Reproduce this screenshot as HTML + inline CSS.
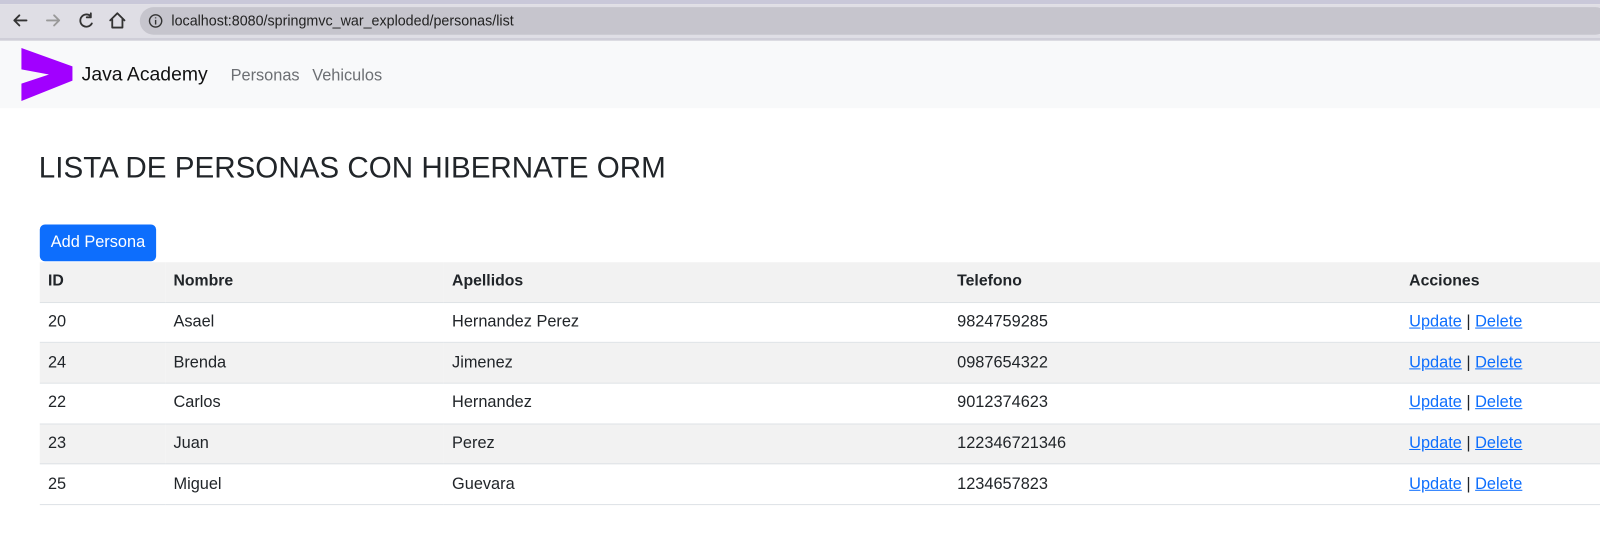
<!DOCTYPE html>
<html><head><meta charset="utf-8"><style>
*{margin:0;padding:0;box-sizing:border-box}
body{width:1600px;height:556px;overflow:hidden;background:#fff;font-family:"Liberation Sans",Arial,sans-serif;color:#212529;position:relative}
#w{position:absolute;left:0;top:0;width:1568px;height:545px;transform:scale(1.0204);transform-origin:0 0}
.tabs{position:absolute;left:0;top:0;width:1568px;height:4px;background:#c9c8d9}
.tool{position:absolute;left:0;top:4px;width:1568px;height:33px;background:#dfdee5}
.url{position:absolute;left:137px;top:7px;width:1440px;height:27px;border-radius:14px;background:#c6c5cd}
.urltext{position:absolute;left:168px;top:12px;font-size:14px;color:#222}
.sep{position:absolute;left:0;top:37px;width:1568px;height:3px;background:#cfced8}
.nav{position:absolute;left:0;top:40px;width:1568px;height:66px;background:#f8f9fa}
.abs{position:absolute}
table{position:absolute;left:39px;top:257px;width:1529px;border-collapse:collapse;font-size:16px}
td,th{height:39.7px;padding:0 8px;text-align:left;border-bottom:1px solid #dee2e6}
th{font-weight:bold;height:39px;font-size:15.5px}
tr.g{background:#f2f2f2}
a{color:#0d6efd;text-decoration:underline}
</style></head><body><div id="w">
<div class="tabs"></div><div class="tool"></div>
<svg class="abs" style="left:10px;top:10px" width="120" height="20" fill="none" stroke-width="1.8" stroke-linecap="round" stroke-linejoin="round">
<path d="M16 10H4M9 5L4 10L9 15" stroke="#333"/>
<path d="M36 10H48M43 5L48 10L43 15" stroke="#999"/>
<path d="M79 6A6 6 0 1 0 80 13M79 3V7H75" stroke="#333"/>
<path d="M98 10L105 3L112 10M100 9V17H110V9" stroke="#333"/>
</svg>
<div class="url"></div>
<svg class="abs" style="left:145px;top:13px" width="16" height="16"><circle cx="7.5" cy="7.5" r="6" fill="none" stroke="#333" stroke-width="1.4"/><path d="M7.5 6.5V11M7.5 4V5" stroke="#333" stroke-width="1.4"/></svg>
<div class="urltext">localhost:8080/springmvc_war_exploded/personas/list</div>
<div class="sep"></div>
<div class="nav"></div>
<svg class="abs" style="left:0;top:0" width="80" height="110"><polygon points="21,47 71,65 71,79 21,99 21,82 48,73 21,68" fill="#a100ff"/></svg>
<div class="abs" style="left:80px;top:63px;font-size:19px;color:#111">Java Academy</div>
<div class="abs" style="left:226px;top:66px;font-size:16px;color:#6c6f73">Personas</div>
<div class="abs" style="left:306px;top:66px;font-size:16px;color:#6c6f73">Vehiculos</div>
<div class="abs" style="left:38px;top:149px;font-size:29px;color:#212529">LISTA DE PERSONAS CON HIBERNATE ORM</div>
<div class="abs" style="left:39px;top:220px;width:114px;height:36px;background:#0d6efd;border-radius:5px;color:#fff;font-size:16px;line-height:36px;text-align:center">Add Persona</div>
<table>
<colgroup><col style="width:123px"><col style="width:273px"><col style="width:495px"><col style="width:443px"><col></colgroup>
<tr class="g"><th>ID</th><th>Nombre</th><th>Apellidos</th><th>Telefono</th><th>Acciones</th></tr>
<tr><td>20</td><td>Asael</td><td>Hernandez Perez</td><td>9824759285</td><td><a>Update</a> | <a>Delete</a></td></tr>
<tr class="g"><td>24</td><td>Brenda</td><td>Jimenez</td><td>0987654322</td><td><a>Update</a> | <a>Delete</a></td></tr>
<tr><td>22</td><td>Carlos</td><td>Hernandez</td><td>9012374623</td><td><a>Update</a> | <a>Delete</a></td></tr>
<tr class="g"><td>23</td><td>Juan</td><td>Perez</td><td>122346721346</td><td><a>Update</a> | <a>Delete</a></td></tr>
<tr><td>25</td><td>Miguel</td><td>Guevara</td><td>1234657823</td><td><a>Update</a> | <a>Delete</a></td></tr>
</table>
</div></body></html>
